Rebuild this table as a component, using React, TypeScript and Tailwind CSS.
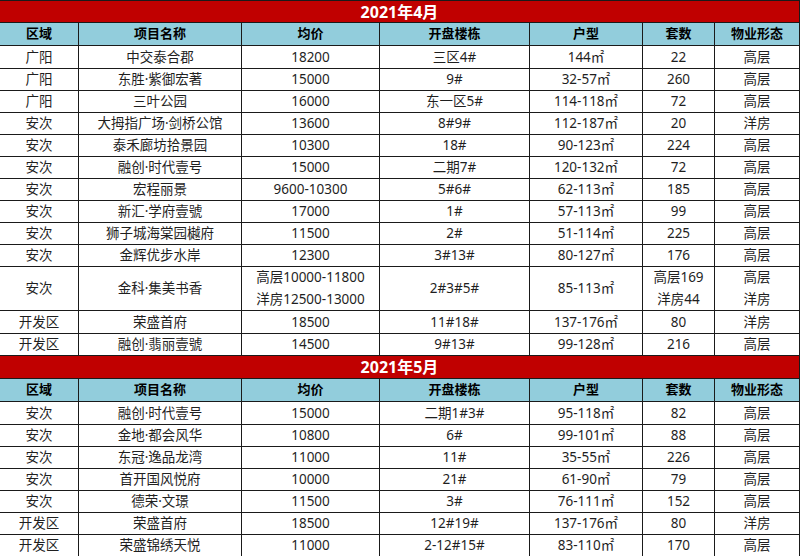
import React from "react";

type Row = (string | string[])[];

const cols = "grid grid-cols-[79px_163px_138px_150px_113px_72px_85px]";

const apr: Row[] = [
  ["广阳", "中交泰合郡", "18200", "三区4#", "144㎡", "22", "高层"],
  ["广阳", "东胜·紫御宏著", "15000", "9#", "32-57㎡", "260", "高层"],
  ["广阳", "三叶公园", "16000", "东一区5#", "114-118㎡", "72", "高层"],
  ["安次", "大拇指广场·剑桥公馆", "13600", "8#9#", "112-187㎡", "20", "洋房"],
  ["安次", "泰禾廊坊拾景园", "10300", "18#", "90-123㎡", "224", "高层"],
  ["安次", "融创·时代壹号", "15000", "二期7#", "120-132㎡", "72", "高层"],
  ["安次", "宏程丽景", "9600-10300", "5#6#", "62-113㎡", "185", "高层"],
  ["安次", "新汇·学府壹號", "17000", "1#", "57-113㎡", "99", "高层"],
  ["安次", "狮子城海棠园樾府", "11500", "2#", "51-114㎡", "225", "高层"],
  ["安次", "金辉优步水岸", "12300", "3#13#", "80-127㎡", "176", "高层"],
  [
    "安次",
    "金科·集美书香",
    ["高层10000-11800", "洋房12500-13000"],
    "2#3#5#",
    "85-113㎡",
    ["高层169", "洋房44"],
    ["高层", "洋房"],
  ],
  ["开发区", "荣盛首府", "18500", "11#18#", "137-176㎡", "80", "洋房"],
  ["开发区", "融创·翡丽壹號", "14500", "9#13#", "99-128㎡", "216", "高层"],
];

const may: Row[] = [
  ["安次", "融创·时代壹号", "15000", "二期1#3#", "95-118㎡", "82", "高层"],
  ["安次", "金地·都会风华", "10800", "6#", "99-101㎡", "88", "高层"],
  ["安次", "东冠·逸品龙湾", "11000", "11#", "35-55㎡", "226", "高层"],
  ["安次", "首开国风悦府", "10000", "21#", "61-90㎡", "79", "高层"],
  ["安次", "德荣·文璟", "11500", "3#", "76-111㎡", "152", "高层"],
  ["开发区", "荣盛首府", "18500", "12#19#", "137-176㎡", "80", "洋房"],
  ["开发区", "荣盛锦绣天悦", "11000", "2-12#15#", "83-110㎡", "170", "高层"],
];

const headers = ["区域", "项目名称", "均价", "开盘楼栋", "户型", "套数", "物业形态"];

function Title({ text, h }: { text: string; h: string }) {
  return (
    <div
      className={`${h} flex items-center justify-center bg-[#c00000] border-b border-r border-[#1a1a1a] text-white font-bold text-[16px]`}
    >
      {text}
    </div>
  );
}

function Header({ h }: { h: string }) {
  return (
    <div className={`${cols} ${h} bg-[#92cddc]`}>
      {headers.map((t) => (
        <div
          key={t}
          className="flex items-center justify-center border-b border-r border-[#1a1a1a] font-bold text-[13px] text-black"
        >
          {t}
        </div>
      ))}
    </div>
  );
}

function Cell({ v }: { v: string | string[] }) {
  return (
    <div className="flex flex-col items-center justify-center border-b border-r border-[#1a1a1a] text-[13.5px] text-[#1f1f1f] leading-[22px] whitespace-nowrap">
      {Array.isArray(v) ? v.map((s) => <span key={s}>{s}</span>) : <span>{v}</span>}
    </div>
  );
}

function Body({ rows }: { rows: Row[] }) {
  return (
    <>
      {rows.map((r, i) => {
        const tall = r.some((c) => Array.isArray(c));
        return (
          <div key={i} className={`${cols} ${tall ? "h-[45px]" : "h-[22px]"} bg-white`}>
            {r.map((c, j) => (
              <Cell key={j} v={c} />
            ))}
          </div>
        );
      })}
    </>
  );
}

export default function App() {
  return (
    <div
      className="w-[800px] h-[556px] overflow-hidden bg-white"
      style={{ fontFamily: '"Noto Sans", "Noto Sans CJK SC", sans-serif' }}
    >
      <div className="border-t border-[#1a1a1a]">
        <Title text="2021年4月" h="h-[22px]" />
      </div>
      <Header h="h-[23px]" />
      <Body rows={apr} />
      <Title text="2021年5月" h="h-[24px]" />
      <Header h="h-[23px]" />
      <Body rows={may} />
    </div>
  );
}
